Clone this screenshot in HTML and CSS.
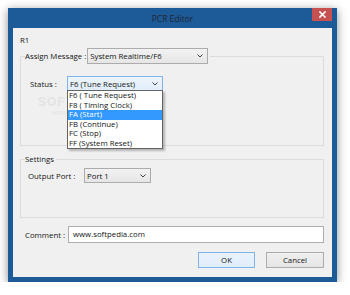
FILE: index.html
```html
<!DOCTYPE html>
<html>
<head>
<meta charset="utf-8">
<link rel="stylesheet" href="styles.css">
</head>
<body>
<div class="window">
  <div class="titlebar">
    <span class="title">PCR Editor</span>
    <div class="close"><svg width="7" height="7" viewBox="0 0 7 7"><path d="M1 1L6 6M6 1L1 6" stroke="#fff" stroke-width="1.6" stroke-linecap="square"/></svg></div>
  </div>
  <div class="client">
    <div class="wm wm1"><span>SOF</span></div>
    <div class="wm wm2"><span>www</span></div>
    <div class="r1">R1</div>
    <fieldset class="group g1">
      <legend class="legend1">
        <span class="lbl">Assign Message :</span>
        <div class="combo assign"><span>System Realtime/F6</span><svg class="chev" width="6" height="4" viewBox="0 0 6 4"><path d="M0.5 0.5L3 3L5.5 0.5" fill="none" stroke="#404040" stroke-width="1"/></svg></div>
      </legend>
      <div class="status-row">
        <span class="lbl">Status :</span>
        <div class="combo-wrap">
          <div class="combo status"><span>F6 (Tune Request)</span><svg class="chev" width="6" height="4" viewBox="0 0 6 4"><path d="M0.5 0.5L3 3L5.5 0.5" fill="none" stroke="#404040" stroke-width="1"/></svg></div>
          <ul class="droplist">
            <li>F6 ( Tune Request)</li>
            <li>F8 ( Timing Clock)</li>
            <li class="sel">FA (Start)</li>
            <li>FB (Continue)</li>
            <li>FC (Stop)</li>
            <li>FF (System Reset)</li>
          </ul>
        </div>
      </div>
    </fieldset>
    <fieldset class="group g2">
      <legend class="legend2">Settings</legend>
      <div class="port-row">
        <span class="lbl">Output Port :</span>
        <div class="combo port"><span>Port 1</span><svg class="chev" width="6" height="4" viewBox="0 0 6 4"><path d="M0.5 0.5L3 3L5.5 0.5" fill="none" stroke="#404040" stroke-width="1"/></svg></div>
      </div>
    </fieldset>
    <div class="comment-row">
      <span class="lbl">Comment :</span>
      <div class="textbox">www.softpedia.com</div>
    </div>
    <div class="buttons">
      <div class="btn ok">OK</div>
      <div class="btn cancel">Cancel</div>
    </div>
  </div>
</div>
</body>
</html>
```

FILE: styles.css
```css
html, body {
  margin: 0;
  padding: 0;
  background: #ffffff;
}
body {
  font-family: "Open Sans", "Noto Sans", sans-serif;
  font-size: 7.8px;
  color: #141414;
}
.window {
  margin: 8px 0 0 8px;
  width: 329px;
  height: 274px;
  box-sizing: border-box;
  background: #1c5a98;
  padding: 0 5px 5px 5px;
  display: flex;
  flex-direction: column;
  box-shadow: 0 2px 9px rgba(0, 0, 0, 0.45);
}
.titlebar {
  height: 20px;
  position: relative;
  display: flex;
  justify-content: center;
  align-items: center;
}
.title {
  font-size: 8.5px;
  color: #1f2630;
  padding-top: 1px;
}
.close {
  position: absolute;
  right: 0;
  top: 0;
  width: 20px;
  height: 13px;
  background: #c75050;
  display: flex;
  align-items: center;
  justify-content: center;
}
.client {
  flex: 1;
  background: #f0f0f0;
  padding: 7px 8px 0 7px;
  position: relative;
  display: flex;
  flex-direction: column;
}
.wm {
  position: absolute;
  color: #e4e4e4;
  font-family: "Liberation Sans", sans-serif;
  white-space: nowrap;
}
.wm1 {
  left: 25px;
  top: 67px;
  font-size: 12px;
  font-weight: bold;
  letter-spacing: 1px;
}
.wm2 {
  left: 39px;
  top: 81px;
  font-size: 7px;
  font-style: italic;
}
.r1 {
  height: 10px;
  line-height: 10px;
  position: relative;
}
.group {
  margin: 0;
  padding: 0;
  border: 1px solid #dcdcdc;
  box-sizing: border-box;
  width: 304px;
  min-width: 0;
  position: relative;
}
.g1 {
  margin-top: 3px;
  height: 98px;
}
.legend1 {
  margin-left: 4px;
  padding: 0 2px 0 0;
  display: flex;
  align-items: center;
  gap: 1px;
  height: 16px;
}
.combo {
  box-sizing: border-box;
  border: 1px solid #acacac;
  background: linear-gradient(#f2f2f2, #e6e6e6);
  display: flex;
  align-items: center;
  justify-content: space-between;
  padding: 0 4px 0 2px;
  line-height: 10px;
}
.assign {
  width: 121px;
  height: 16px;
}
.chev {
  display: block;
}
.status-row {
  display: flex;
  align-items: center;
  margin: 12px 0 0 9px;
  gap: 0;
}
.status-row .lbl {
  width: 37px;
}
.combo-wrap {
  position: relative;
}
.status {
  width: 96px;
  height: 15px;
  border-color: #7eb4ea;
  background: linear-gradient(#eef5fc, #e0edfb);
}
.droplist {
  position: absolute;
  left: 0;
  top: 14px;
  width: 96px;
  margin: 0;
  padding: 0;
  list-style: none;
  box-sizing: border-box;
  border: 1px solid #646464;
  background: #ffffff;
  box-shadow: 2px 2px 2px rgba(0, 0, 0, 0.25);
  z-index: 2;
}
.droplist li {
  height: 9.5px;
  line-height: 9.5px;
  padding-left: 1px;
  white-space: nowrap;
}
.droplist li.sel {
  background: #3399ff;
  color: #ffffff;
}
.g2 {
  margin-top: 7px;
  height: 65px;
}
.legend2 {
  margin-left: 4px;
  padding: 0 2px 0 0;
  height: 12px;
  line-height: 12px;
}
.port-row {
  display: flex;
  align-items: center;
  margin: 3px 0 0 7px;
}
.port-row .lbl {
  width: 56px;
}
.port {
  width: 67px;
  height: 15px;
}
.comment-row {
  margin-top: 8px;
  display: flex;
  align-items: center;
}
.comment-row .lbl {
  width: 43px;
  padding-left: 5px;
}
.textbox {
  box-sizing: border-box;
  width: 256px;
  height: 17px;
  border: 1px solid #abadb3;
  background: #ffffff;
  padding: 0 4px;
  line-height: 14px;
}
.buttons {
  margin-top: 9px;
  display: flex;
  justify-content: flex-end;
  gap: 11px;
  width: 304px;
}
.btn {
  box-sizing: border-box;
  height: 16px;
  border: 1px solid #acacac;
  background: linear-gradient(#f0f0f0, #e5e5e5);
  display: flex;
  align-items: center;
  justify-content: center;
}
.ok {
  width: 57px;
  border-color: #7eb4ea;
  background: linear-gradient(#eaf3fc, #e0edfb);
}
.cancel {
  width: 58px;
}
```
